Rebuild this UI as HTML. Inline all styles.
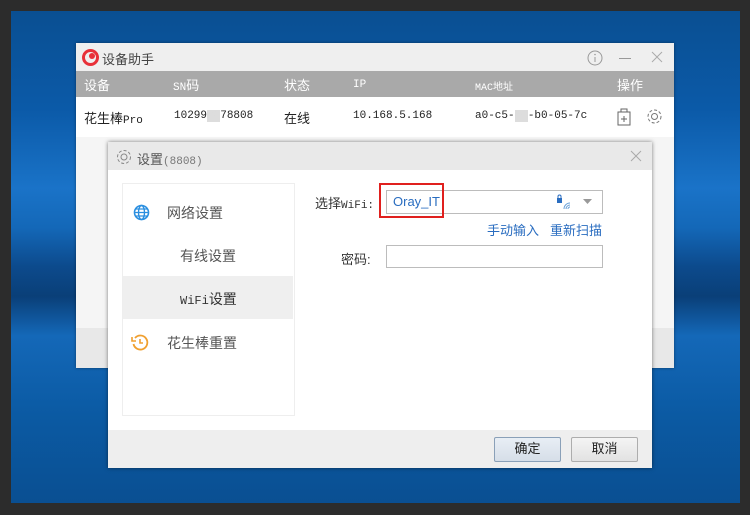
<!DOCTYPE html>
<html><head><meta charset="utf-8"><style>
*{margin:0;padding:0;box-sizing:border-box}
body{width:750px;height:515px;background:#2c2c2c;position:relative;overflow:hidden;font-family:"Liberation Sans","Noto Sans CJK SC",sans-serif;font-size:13px;color:#333}
.desk{position:absolute;left:11px;top:11px;width:729px;height:492px;background:linear-gradient(180deg,#0a4f92 0%,#0b5aa8 20%,#1a73c8 36%,#1468b8 44%,#0c4a8c 52%,#0a3f78 58%,#1468b8 66%,#0b5aa3 82%,#0a4f92 100%)}
.abs{position:absolute}
.mono{font-family:"Liberation Mono","Noto Sans CJK SC",monospace}
.main{left:76px;top:43px;width:598px;height:325px;background:#f5f5f5;box-shadow:0 0 3px rgba(0,0,0,.4)}
.tb{left:0;top:0;width:598px;height:28px;background:#efefef}
.hdr{left:0;top:28px;width:598px;height:26px;background:#a9a9a9;color:#fff;font-size:13px}
.hdr span,.row span{position:absolute;top:4px}
.row{left:0;top:54px;width:598px;height:40px;background:#fff;font-size:11px;color:#222}
.row span{top:13px}
.dlg{left:108px;top:142px;width:544px;height:326px;background:#fff;box-shadow:0 0 4px rgba(0,0,0,.5)}
.dt{left:0;top:0;width:544px;height:28px;background:#e9e9e9;color:#555}
.lp{left:14px;top:41px;width:173px;height:233px;border:1px solid #eee;background:#fff}
.inp{border:1px solid #bcbcbc;background:#fff}
.ft{left:0;top:288px;width:544px;height:38px;background:#eeeeee}
.btn{border:1px solid #adadad;border-radius:2px;background:linear-gradient(#f4f4f4,#e2e2e2);text-align:center;line-height:22px;font-size:13px;color:#222;height:25px;width:67px}
</style></head><body>
<div class="desk"></div>
<div class="abs main">
 <div class="abs tb">
  <svg class="abs" style="left:6px;top:6px" width="17" height="17"><circle cx="8.5" cy="8.5" r="7" fill="none" stroke="#e83038" stroke-width="3"/><circle cx="10" cy="7" r="3" fill="#e83038"/></svg>
  <span class="abs" style="left:26px;top:6px;color:#444;font-size:13px">设备助手</span>
  <svg class="abs" style="left:511px;top:7px" width="16" height="16"><circle cx="8" cy="8" r="7" fill="none" stroke="#999"/><line x1="8" y1="7" x2="8" y2="12" stroke="#999"/><circle cx="8" cy="4.5" r=".8" fill="#999"/></svg>
  <div class="abs" style="left:543px;top:15px;width:12px;height:1px;background:#999"></div>
  <svg class="abs" style="left:575px;top:8px" width="12" height="12"><path d="M1 1L11 11M11 1L1 11" stroke="#aaa"/></svg>
 </div>
 <div class="abs hdr"><span style="left:8px">设备</span><span style="left:97px"><span class="mono" style="position:static;font-size:11px">SN</span>码</span><span style="left:208px">状态</span><span class="mono" style="left:277px;font-size:11px;top:8px">IP</span><span class="mono" style="left:399px;font-size:10px;top:7px">MAC地址</span><span style="left:541px">操作</span></div>
 <div class="abs row mono"><span style="left:8px;font-size:13px;top:11px">花生棒<span style="position:static;font-size:11px">Pro</span></span><span style="left:98px">10299<span style="position:static;background:#ddd;color:#ddd">00</span>78808</span><span style="left:208px;font-size:13px;top:11px">在线</span><span style="left:277px">10.168.5.168</span><span style="left:399px">a0-c5-<span style="position:static;background:#ddd;color:#ddd">00</span>-b0-05-7c</span>
  <svg class="abs" style="left:540px;top:10px" width="16" height="20"><rect x="2" y="5" width="12" height="13" fill="none" stroke="#666"/><path d="M5 5V2h6v3M8 9v6M5 12h6" stroke="#666" fill="none"/></svg>
  <svg class="abs" style="left:570px;top:11px" width="17" height="17"><circle cx="8.5" cy="8.5" r="3" fill="none" stroke="#777"/><circle cx="8.5" cy="8.5" r="6.5" fill="none" stroke="#777" stroke-dasharray="3 2"/></svg>
 </div>
 <div class="abs" style="left:0;top:285px;width:598px;height:40px;background:#e8e8e8"></div>
</div>
<div class="abs dlg">
 <div class="abs dt">
  <svg class="abs" style="left:8px;top:7px" width="16" height="16"><circle cx="8" cy="8" r="3" fill="none" stroke="#888"/><circle cx="8" cy="8" r="6.5" fill="none" stroke="#888" stroke-dasharray="3 2"/></svg>
  <span class="abs" style="left:29px;top:7px;font-size:13px">设置<span class="mono" style="font-size:11px;color:#777">(8808)</span></span>
  <svg class="abs" style="left:522px;top:8px" width="12" height="12"><path d="M1 1L11 11M11 1L1 11" stroke="#aaa"/></svg>
 </div>
 <div class="abs lp">
  <svg class="abs" style="left:10px;top:20px" width="17" height="17"><circle cx="8.5" cy="8.5" r="7" fill="none" stroke="#2b8fe0" stroke-width="1.6"/><ellipse cx="8.5" cy="8.5" rx="3" ry="7" fill="none" stroke="#2b8fe0" stroke-width="1.4"/><path d="M1.5 8.5h14M3 5h11M3 12h11" stroke="#2b8fe0" stroke-width="1.2"/></svg>
  <span class="abs" style="left:44px;top:19px;font-size:14px;color:#555">网络设置</span>
  <span class="abs" style="left:57px;top:62px;font-size:14px;color:#555">有线设置</span>
  <div class="abs" style="left:0;top:92px;width:170px;height:43px;background:#efefef"></div>
  <span class="abs" style="left:57px;top:105px;font-size:14px;color:#333"><span class="mono" style="font-size:12px">WiFi</span>设置</span>
  <svg class="abs" style="left:8px;top:150px;" width="18" height="18"><path d="M4 4A7 7 0 1 1 2.5 10" fill="none" stroke="#f0a030" stroke-width="1.8"/><path d="M1 3v4h4" fill="none" stroke="#f0a030" stroke-width="1.6"/><path d="M9 5v4h3" fill="none" stroke="#f0a030" stroke-width="1.6"/></svg>
  <span class="abs" style="left:44px;top:149px;font-size:14px;color:#555">花生棒重置</span>
 </div>
 <span class="abs" style="left:207px;top:51px;font-size:13px">选择<span class="mono" style="font-size:11px">WiFi:</span></span>
 <div class="abs inp" style="left:278px;top:48px;width:217px;height:24px"></div>
 <span class="abs" style="left:285px;top:52px;font-size:13px;color:#2a6dc0">Oray_IT</span>
 <div class="abs" style="left:271px;top:41px;width:65px;height:35px;border:2px solid #e0201e"></div>
 <svg class="abs" style="left:448px;top:52px" width="20" height="16"><rect x="1" y="4" width="5" height="5" fill="#2a6dc0"/><path d="M2 4V2.5a1.5 1.5 0 0 1 3 0V4" fill="none" stroke="#2a6dc0"/><path d="M8 15a6 6 0 0 1 6-6M10 15a4 4 0 0 1 4-4M12 15a2 2 0 0 1 2-2" fill="none" stroke="#6aa0d8"/></svg>
 <svg class="abs" style="left:475px;top:57px" width="9" height="6"><path d="M0 0h9L4.5 5z" fill="#999"/></svg>
 <span class="abs" style="left:379px;top:78px;font-size:13px;color:#2a6dc0">手动输入</span>
 <span class="abs" style="left:442px;top:78px;font-size:13px;color:#2a6dc0">重新扫描</span>
 <span class="abs" style="left:233px;top:107px;font-size:13px">密码:</span>
 <div class="abs inp" style="left:278px;top:103px;width:217px;height:23px"></div>
 <div class="abs ft">
  <div class="abs btn" style="left:386px;top:7px;border-color:#8aa0b8;background:linear-gradient(#e8eef5,#d6dee8)">确定</div>
  <div class="abs btn" style="left:463px;top:7px">取消</div>
 </div>
</div>
</body></html>
